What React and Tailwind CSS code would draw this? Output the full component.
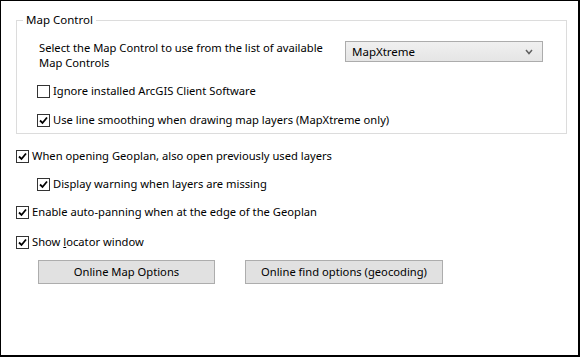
import React from 'react'

function Check ({ checked, label, className = '' }) {
  return (
    <label className={`flex h-4 items-center ${className}`}>
      <span className="flex h-[13px] w-[13px] shrink-0 items-center justify-center border border-[#333333] bg-white">
        {checked && (
          <svg width="9" height="9" viewBox="0 0 9 9">
            <path d="M1 4.5 L3.5 7 L8 1.5" fill="none" stroke="#000" strokeWidth="1.8" />
          </svg>
        )}
      </span>
      <span className="ml-[3px] whitespace-nowrap">{label}</span>
    </label>
  )
}

export default function App () {
  return (
    <div
      className="h-[357px] w-[580px] border-t border-l border-r-2 border-b-2 border-black bg-white text-[11.2px] leading-4 text-black"
      style={{ fontFamily: '"Segoe UI", "Noto Sans", sans-serif' }}
    >
      <fieldset className="ml-[15px] mt-[11px] h-[122px] w-[551px] border border-[#dcdcdc]">
        <legend className="ml-[6px] px-[3px] text-[11.5px]">Map Control</legend>
        <div className="ml-[22px] mt-[12px] flex items-start">
          <p className="w-[300px] leading-[15px]">
            Select the Map Control to use from the list of available Map Controls
          </p>
          <div className="ml-[6px] mt-[1px] flex h-[21px] w-[198px] items-center justify-between border border-[#acacac] bg-gradient-to-b from-[#f0f0f0] to-[#e5e5e5] pl-[6px] pr-[9px] text-[11.5px]">
            <span>MapXtreme</span>
            <svg width="8" height="6" viewBox="0 0 8 6">
              <path d="M1 1 L4 4.5 L7 1" fill="none" stroke="#606060" strokeWidth="1.5" />
            </svg>
          </div>
        </div>
        <Check className="ml-[20px] mt-[13px]" label="Ignore installed ArcGIS Client Software" />
        <Check className="ml-[20px] mt-[13px]" checked label="Use line smoothing when drawing map layers (MapXtreme only)" />
      </fieldset>
      <div className="ml-[15px] mt-[14px] flex flex-col">
        <Check checked label="When opening Geoplan, also open previously used layers" />
        <Check className="ml-[21px] mt-[12px]" checked label="Display warning when layers are missing" />
        <Check className="mt-[12px]" checked label="Enable auto-panning when at the edge of the Geoplan" />
        <Check className="mt-[14px]" checked label={<span>Show <u>l</u>ocator window</span>} />
        <div className="mt-[10px] ml-[22px] flex gap-[30px]">
          <button className="h-6 w-[177px] border border-[#adadad] bg-[#e1e1e1]">Online Map Options</button>
          <button className="h-6 w-[198px] border border-[#adadad] bg-[#e1e1e1]">Online find options (geocoding)</button>
        </div>
      </div>
    </div>
  )
}
